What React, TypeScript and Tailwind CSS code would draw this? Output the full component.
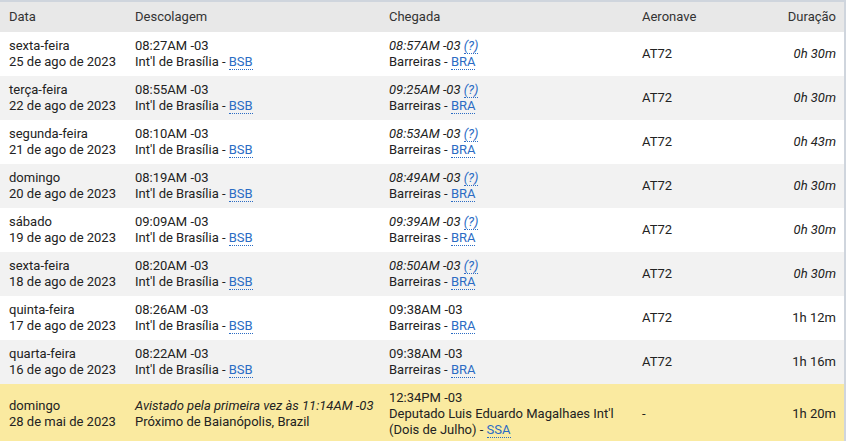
import React from "react";

type Row = {
  day: string;
  date: string;
  dep: string;
  arrTime: string;
  est: boolean;
  ac: string;
  dur: string;
  durItalic: boolean;
};

const rows: Row[] = [
  { day: "sexta-feira", date: "25 de ago de 2023", dep: "08:27AM -03", arrTime: "08:57AM -03", est: true, ac: "AT72", dur: "0h 30m", durItalic: true },
  { day: "terça-feira", date: "22 de ago de 2023", dep: "08:55AM -03", arrTime: "09:25AM -03", est: true, ac: "AT72", dur: "0h 30m", durItalic: true },
  { day: "segunda-feira", date: "21 de ago de 2023", dep: "08:10AM -03", arrTime: "08:53AM -03", est: true, ac: "AT72", dur: "0h 43m", durItalic: true },
  { day: "domingo", date: "20 de ago de 2023", dep: "08:19AM -03", arrTime: "08:49AM -03", est: true, ac: "AT72", dur: "0h 30m", durItalic: true },
  { day: "sábado", date: "19 de ago de 2023", dep: "09:09AM -03", arrTime: "09:39AM -03", est: true, ac: "AT72", dur: "0h 30m", durItalic: true },
  { day: "sexta-feira", date: "18 de ago de 2023", dep: "08:20AM -03", arrTime: "08:50AM -03", est: true, ac: "AT72", dur: "0h 30m", durItalic: true },
  { day: "quinta-feira", date: "17 de ago de 2023", dep: "08:26AM -03", arrTime: "09:38AM -03", est: false, ac: "AT72", dur: "1h 12m", durItalic: false },
  { day: "quarta-feira", date: "16 de ago de 2023", dep: "08:22AM -03", arrTime: "09:38AM -03", est: false, ac: "AT72", dur: "1h 16m", durItalic: false },
];

function Code({ children }: { children: React.ReactNode }) {
  return (
    <span className="text-[#2b6cc4] border-b border-dotted border-[#2b6cc4] leading-[14px] inline-block">
      {children}
    </span>
  );
}

export default function App() {
  return (
    <div
      className="w-[847px] h-[441px] overflow-hidden bg-white text-[13px] leading-[16px] text-[#222]"
      style={{ fontFamily: "Roboto, 'Liberation Sans', sans-serif" }}
    >
      <div className="w-[846px] border-t-2 border-r-2 border-[#cfd5dd]">
        <div className="flex h-[30px] items-center bg-[#e8e8e8] text-[#333]">
          <div className="w-[127px] pl-[9px]">Data</div>
          <div className="w-[254px] pl-[8px]">Descolagem</div>
          <div className="w-[253px] pl-[8px]">Chegada</div>
          <div className="w-[130px] pl-[8px]">Aeronave</div>
          <div className="flex-1 pr-[8px] text-right">Duração</div>
        </div>
        {rows.map((r, i) => (
          <div
            key={i}
            className={`flex h-[44px] items-center ${i % 2 === 0 ? "bg-white" : "bg-[#f2f2f2]"}`}
          >
            <div className="w-[127px] pl-[9px]">
              <div>{r.day}</div>
              <div>{r.date}</div>
            </div>
            <div className="w-[254px] pl-[8px]">
              <div>{r.dep}</div>
              <div>
                Int'l de Brasília - <Code>BSB</Code>
              </div>
            </div>
            <div className="w-[253px] pl-[8px]">
              <div className={r.est ? "italic" : ""}>
                {r.arrTime}
                {r.est && (
                  <>
                    {" "}
                    <Code>(?)</Code>
                  </>
                )}
              </div>
              <div>
                Barreiras - <Code>BRA</Code>
              </div>
            </div>
            <div className="w-[130px] pl-[8px]">{r.ac}</div>
            <div className={`flex-1 pr-[8px] text-right ${r.durItalic ? "italic" : ""}`}>{r.dur}</div>
          </div>
        ))}
        <div className="flex h-[60px] items-center bg-[#faeaa0] py-[6px]">
          <div className="w-[127px] pl-[9px]">
            <div>domingo</div>
            <div>28 de mai de 2023</div>
          </div>
          <div className="w-[254px] pl-[8px]">
            <div className="italic">Avistado pela primeira vez às 11:14AM -03</div>
            <div>Próximo de Baianópolis, Brazil</div>
          </div>
          <div className="w-[253px] pl-[8px]">
            <div>12:34PM -03</div>
            <div>Deputado Luis Eduardo Magalhaes Int'l</div>
            <div>
              (Dois de Julho) - <Code>SSA</Code>
            </div>
          </div>
          <div className="w-[130px] pl-[8px]">-</div>
          <div className="flex-1 pr-[8px] text-right">1h 20m</div>
        </div>
      </div>
    </div>
  );
}
